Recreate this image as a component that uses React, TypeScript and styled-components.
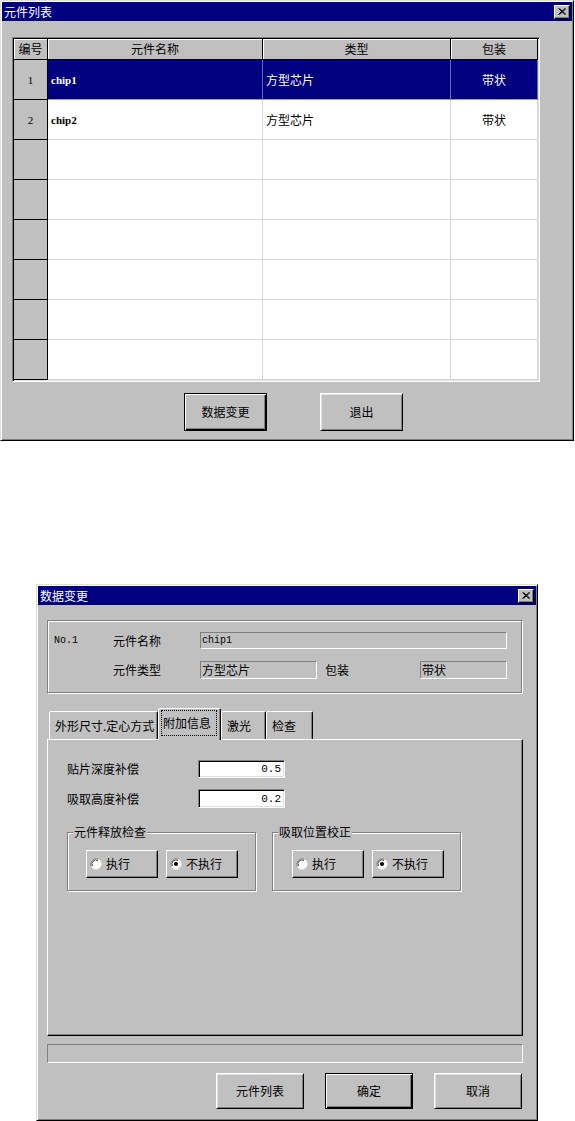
import React from 'react';
import styled, { createGlobalStyle } from 'styled-components';

const GRAY = '#c0c0c0';
const NAVY = '#000080';
const CJK = '"Noto Sans CJK SC", "Liberation Sans", sans-serif';
const MONO = '"Liberation Mono", "DejaVu Sans Mono", monospace';

const GlobalStyle = createGlobalStyle`
  html, body {
    margin: 0;
    padding: 0;
    background: #fff;
  }
  body {
    font-family: ${CJK};
    font-size: 12px;
    line-height: 14px;
    color: #000;
  }
  * {
    box-sizing: border-box;
  }
`;

const Page = styled.div`
  width: 575px;
  height: 1121px;
  overflow: hidden;
  display: flex;
  flex-direction: column;
  align-items: flex-start;
`;

const Window = styled.div<{ $w: number; $h: number; $top?: number; $left?: number }>`
  flex: none;
  width: ${({ $w }) => $w}px;
  height: ${({ $h }) => $h}px;
  margin-top: ${({ $top }) => $top ?? 0}px;
  margin-left: ${({ $left }) => $left ?? 0}px;
  background: ${GRAY};
  border: 1px solid;
  border-color: #dfdfdf #000 #000 #dfdfdf;
  box-shadow: inset 1px 1px #fff, inset -1px -1px #808080;
  padding: 1px;
  display: flex;
  flex-direction: column;
`;

const TitleBar = styled.div`
  height: 19px;
  background: ${NAVY};
  color: #fff;
  display: flex;
  align-items: center;
  justify-content: space-between;
  padding: 0 2px 0 2px;
  font-size: 12px;
`;

const CloseButton = styled.div`
  width: 16px;
  height: 14px;
  background: ${GRAY};
  border: 1px solid;
  border-color: #fff #000 #000 #fff;
  box-shadow: inset -1px -1px #808080;
  display: flex;
  align-items: center;
  justify-content: center;
`;

const CloseIcon = () => (
  <svg width="8" height="7" viewBox="0 0 8 7">
    <path d="M0.5 0.5 L7 6.5 M1.5 0.5 L8 6.5 M7 0.5 L0.5 6.5 M8 0.5 L1.5 6.5" stroke="#000" strokeWidth="1" />
  </svg>
);

/* ---------- window 1: list ---------- */

const Grid = styled.div`
  margin: 16px 0 0 10px;
  width: 528px;
  height: 345px;
  border: 1px solid;
  border-color: #808080 #fff #fff #808080;
  box-shadow: inset 1px 1px #000, inset -1px -1px #dfdfdf;
  padding: 1px;
  background: #fff;
  display: grid;
  grid-template-columns: 34px 215px 188px 87px;
  grid-template-rows: 21px repeat(8, 40px);
`;

const HeadCell = styled.div`
  background: ${GRAY};
  border-right: 1px solid #000;
  border-bottom: 1px solid #000;
  box-shadow: inset 1px 1px #fff;
  display: flex;
  align-items: center;
  justify-content: center;
`;

const RowHead = styled.div`
  background: ${GRAY};
  border-right: 1px solid #000;
  border-bottom: 1px solid #000;
  display: flex;
  align-items: center;
  justify-content: center;
  font-family: "Liberation Serif", serif;
  font-size: 11px;
`;

const Cell = styled.div<{ $sel?: boolean; $center?: boolean; $latin?: boolean }>`
  background: ${({ $sel }) => ($sel ? NAVY : '#fff')};
  color: ${({ $sel }) => ($sel ? '#fff' : '#000')};
  border-right: 1px solid ${({ $sel }) => ($sel ? '#6a6aa8' : '#d6d6d6')};
  border-bottom: 1px solid ${({ $sel }) => ($sel ? '#9a9ac0' : '#d6d6d6')};
  display: flex;
  align-items: center;
  justify-content: ${({ $center }) => ($center ? 'center' : 'flex-start')};
  padding-left: ${({ $center }) => ($center ? 0 : 3)}px;
  font-family: ${({ $latin }) => ($latin ? '"Liberation Serif", serif' : CJK)};
  font-size: ${({ $latin }) => ($latin ? 11 : 12)}px;
  font-weight: ${({ $latin }) => ($latin ? 'bold' : 'normal')};
`;

const ListButtons = styled.div`
  margin: 11px 0 0 182px;
  display: flex;
  gap: 53px;
`;

const Button = styled.div<{ $w: number; $h: number; $default?: boolean }>`
  width: ${({ $w }) => $w}px;
  height: ${({ $h }) => $h}px;
  background: ${GRAY};
  border: 1px solid;
  border-color: ${({ $default }) => ($default ? '#000' : '#fff #000 #000 #fff')};
  box-shadow: ${({ $default }) =>
    $default
      ? 'inset 1px 1px #fff, inset -1px -1px #000, inset -2px -2px #808080'
      : 'inset 1px 1px #dfdfdf, inset -1px -1px #808080'};
  display: flex;
  align-items: center;
  justify-content: center;
`;

/* ---------- window 2: edit dialog ---------- */

const DialogBody = styled.div`
  padding-left: 9px;
  display: flex;
  flex-direction: column;
`;

const Etched = styled.div`
  border: 1px solid #808080;
  box-shadow: inset 1px 1px #fff, 1px 1px #fff;
`;

const InfoGroup = styled(Etched)`
  margin-top: 15px;
  width: 475px;
  height: 73px;
  padding: 11px 0 0 6px;
  display: grid;
  grid-template-columns: 59px 87px 117px 103px 87px;
  grid-template-rows: 17px 18px;
  row-gap: 12px;
`;

const Label = styled.div<{ $mono?: boolean; $pad?: number }>`
  display: flex;
  align-items: center;
  padding-left: ${({ $pad }) => $pad ?? 0}px;
  font-family: ${({ $mono }) => ($mono ? MONO : CJK)};
  font-size: ${({ $mono }) => ($mono ? 10 : 12)}px;
`;

const ReadField = styled.div<{ $span?: number; $mono?: boolean }>`
  grid-column: span ${({ $span }) => $span ?? 1};
  background: ${GRAY};
  border: 1px solid;
  border-color: #808080 #fff #fff #808080;
  display: flex;
  align-items: center;
  padding-left: 1px;
  font-family: ${({ $mono }) => ($mono ? MONO : CJK)};
  font-size: ${({ $mono }) => ($mono ? 10 : 12)}px;
`;

const TabStrip = styled.div`
  margin-top: 15px;
  height: 31px;
  padding-left: 2px;
  display: flex;
  align-items: flex-end;
`;

const Tab = styled.div<{ $w: number; $active?: boolean }>`
  position: relative;
  z-index: ${({ $active }) => ($active ? 1 : 0)};
  width: ${({ $w }) => $w}px;
  height: ${({ $active }) => ($active ? 32 : 28)}px;
  margin-bottom: ${({ $active }) => ($active ? -1 : 0)}px;
  background: ${GRAY};
  border: 1px solid;
  border-bottom: none;
  border-color: #fff #000 transparent #fff;
  border-radius: 2px 2px 0 0;
  box-shadow: inset -1px 0 #808080;
  display: flex;
  align-items: ${({ $active }) => ($active ? 'stretch' : 'center')};
  padding: ${({ $active }) => ($active ? '1px 3px 4px 2px' : '0 0 0 5px')};
`;

const FocusText = styled.span`
  flex: 1;
  outline: 1px dotted #000;
  outline-offset: -1px;
  display: flex;
  align-items: center;
  padding-left: 2px;
`;

const Panel = styled.div`
  width: 476px;
  height: 297px;
  border: 1px solid;
  border-color: #fff #000 #000 #fff;
  box-shadow: inset -1px -1px #808080;
  padding: 20px 0 0 19px;
  display: flex;
  flex-direction: column;
`;

const FieldRow = styled.div<{ $top?: number; $h: number }>`
  margin-top: ${({ $top }) => $top ?? 0}px;
  height: ${({ $h }) => $h}px;
  display: flex;
  align-items: center;
`;

const FieldLabel = styled.div`
  width: 131px;
`;

const NumInput = styled.div`
  width: 87px;
  height: 100%;
  background: #fff;
  border: 1px solid;
  border-color: #808080 #fff #fff #808080;
  box-shadow: inset 1px 1px #000, inset -1px -1px #dfdfdf;
  display: flex;
  align-items: center;
  justify-content: flex-end;
  padding-right: 3px;
  font-family: ${MONO};
  font-size: 11px;
`;

const GroupsRow = styled.div`
  margin-top: 24px;
  display: flex;
  gap: 16px;
`;

const OptionGroup = styled(Etched)<{ $pad: number }>`
  position: relative;
  width: 189px;
  height: 59px;
  padding: 17px 0 0 ${({ $pad }) => $pad}px;
  display: flex;
  gap: 8px;
`;

const Legend = styled.span`
  position: absolute;
  top: -8px;
  left: 5px;
  padding: 0 1px;
  background: ${GRAY};
  line-height: 14px;
`;

const RadioButton = styled.div`
  width: 72px;
  height: 28px;
  background: ${GRAY};
  border: 1px solid;
  border-color: #fff #000 #000 #fff;
  box-shadow: inset -1px -1px #808080;
  display: flex;
  align-items: center;
  gap: 4px;
  padding-left: 3px;
`;

const RadioDot = ({ checked }: { checked?: boolean }) => (
  <svg width="12" height="12" viewBox="0 0 12 12">
    <circle cx="6" cy="6" r="5.5" fill="#fff" />
    <path d="M1.2 8.5 A5.5 5.5 0 0 1 8.5 1.2" fill="none" stroke="#808080" strokeWidth="1" />
    <path d="M2.5 8 A4 4 0 0 1 8 2.5" fill="none" stroke="#404040" strokeWidth="1" />
    <path d="M10.8 3.5 A5.5 5.5 0 0 1 3.5 10.8" fill="none" stroke="#dfdfdf" strokeWidth="1" />
    {checked && <circle cx="6" cy="6" r="2" fill="#000" />}
  </svg>
);

const StatusBar = styled.div`
  margin-top: 8px;
  width: 476px;
  height: 19px;
  border: 1px solid;
  border-color: #808080 #fff #fff #808080;
`;

const DialogButtons = styled.div`
  margin-top: 10px;
  width: 475px;
  display: flex;
  justify-content: flex-end;
  gap: 21px;
`;

const rows = [
  { no: '1', name: 'chip1', type: '方型芯片', pack: '带状', sel: true },
  { no: '2', name: 'chip2', type: '方型芯片', pack: '带状' },
  ...Array.from({ length: 6 }, () => ({ no: '', name: '', type: '', pack: '' })),
];

const tabs = [
  { label: '外形尺寸.定心方式', w: 109 },
  { label: '附加信息', w: 63, active: true },
  { label: '激光', w: 45 },
  { label: '检查', w: 47 },
];

export default function App() {
  return (
    <Page>
      <GlobalStyle />
      <Window $w={574} $h={441}>
        <TitleBar>
          <span>元件列表</span>
          <CloseButton>
            <CloseIcon />
          </CloseButton>
        </TitleBar>
        <Grid>
          <HeadCell>编号</HeadCell>
          <HeadCell>元件名称</HeadCell>
          <HeadCell>类型</HeadCell>
          <HeadCell>包装</HeadCell>
          {rows.map((r, i) => (
            <React.Fragment key={i}>
              <RowHead>{r.no}</RowHead>
              <Cell $sel={r.sel} $latin>
                {r.name}
              </Cell>
              <Cell $sel={r.sel}>{r.type}</Cell>
              <Cell $sel={r.sel} $center>
                {r.pack}
              </Cell>
            </React.Fragment>
          ))}
        </Grid>
        <ListButtons>
          <Button $w={83} $h={38} $default>
            数据变更
          </Button>
          <Button $w={83} $h={38}>
            退出
          </Button>
        </ListButtons>
      </Window>

      <Window $w={502} $h={537} $top={143} $left={36}>
        <TitleBar>
          <span>数据变更</span>
          <CloseButton>
            <CloseIcon />
          </CloseButton>
        </TitleBar>
        <DialogBody>
          <InfoGroup>
            <Label $mono>No.1</Label>
            <Label>元件名称</Label>
            <ReadField $span={3} $mono>
              chip1
            </ReadField>
            <Label />
            <Label>元件类型</Label>
            <ReadField>方型芯片</ReadField>
            <Label $pad={8}>包装</Label>
            <ReadField>带状</ReadField>
          </InfoGroup>

          <TabStrip>
            {tabs.map((t) =>
              t.active ? (
                <Tab key={t.label} $w={t.w} $active>
                  <FocusText>{t.label}</FocusText>
                </Tab>
              ) : (
                <Tab key={t.label} $w={t.w}>
                  {t.label}
                </Tab>
              )
            )}
          </TabStrip>
          <Panel>
            <FieldRow $h={18}>
              <FieldLabel>贴片深度补偿</FieldLabel>
              <NumInput>0.5</NumInput>
            </FieldRow>
            <FieldRow $h={19} $top={11}>
              <FieldLabel>吸取高度补偿</FieldLabel>
              <NumInput>0.2</NumInput>
            </FieldRow>
            <GroupsRow>
              <OptionGroup $pad={18}>
                <Legend>元件释放检查</Legend>
                <RadioButton>
                  <RadioDot />
                  执行
                </RadioButton>
                <RadioButton>
                  <RadioDot checked />
                  不执行
                </RadioButton>
              </OptionGroup>
              <OptionGroup $pad={19}>
                <Legend>吸取位置校正</Legend>
                <RadioButton>
                  <RadioDot />
                  执行
                </RadioButton>
                <RadioButton>
                  <RadioDot checked />
                  不执行
                </RadioButton>
              </OptionGroup>
            </GroupsRow>
          </Panel>
          <StatusBar />
          <DialogButtons>
            <Button $w={88} $h={36}>
              元件列表
            </Button>
            <Button $w={88} $h={36} $default>
              确定
            </Button>
            <Button $w={88} $h={36}>
              取消
            </Button>
          </DialogButtons>
        </DialogBody>
      </Window>
    </Page>
  );
}
